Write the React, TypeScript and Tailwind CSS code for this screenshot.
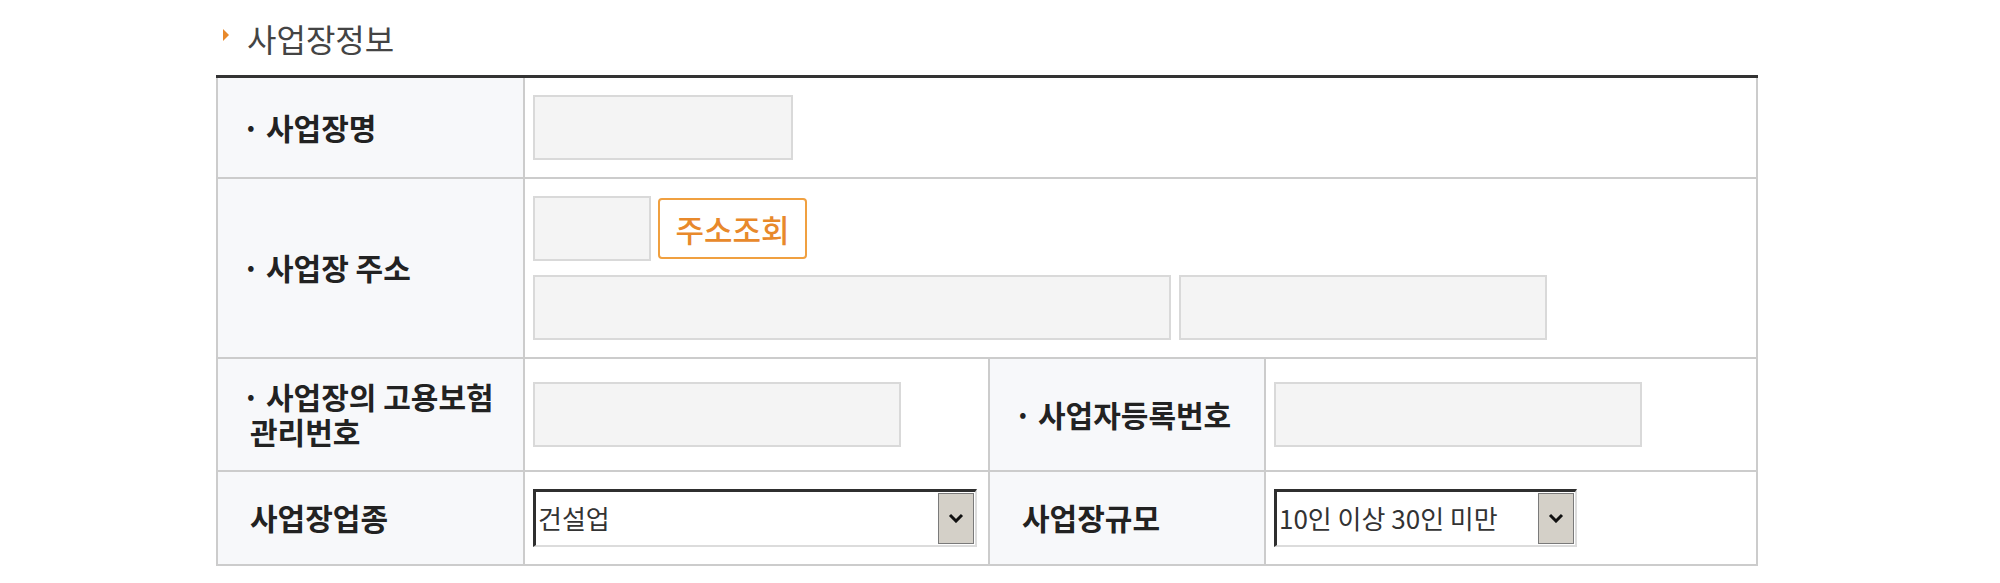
import React from "react";

const labelCell =
  "bg-[#f7f8fa] border-2 border-[#cccccc] pl-[32px] align-middle text-left font-bold text-[30px] leading-[35px] text-[#222]";
const valueCell = "border-2 border-[#cccccc] pl-[8px] align-middle bg-white";
const inputBox = "block h-[65px] bg-[#f4f4f4] border-2 border-[#d9d9d9] outline-none";

const Dot = () => <span className="-ml-[8px] inline-block w-[24px]">·</span>;

const Chevron = () => (
  <svg width="16" height="10" viewBox="0 0 16 10">
    <path d="M2 2 L8 8 L14 2" fill="none" stroke="#111" strokeWidth="3" />
  </svg>
);

const SelectBox = ({ value, width }: { value: string; width: string }) => (
  <div
    className={`${width} h-[58px] flex items-stretch bg-white border-t-[3px] border-l-[3px] border-t-[#2f2f2f] border-l-[#2f2f2f] border-b-2 border-r-2 border-b-[#dcdcdc] border-r-[#dcdcdc]`}
  >
    <div className="flex-1 flex items-center pl-[2px] text-[26px] font-normal text-[#333] leading-none whitespace-nowrap">
      {value}
    </div>
    <div className="w-[36px] my-[1px] mr-[1px] flex items-center justify-center bg-[#d4d0c8] border border-[#7a7a7a]">
      <Chevron />
    </div>
  </div>
);

const App = () => {
  return (
    <div className="w-[2000px] h-[583px] bg-white font-['Noto_Sans_CJK_KR','Malgun_Gothic',sans-serif]">
      <div className="ml-[216px] w-[1540px]">
        <div className="h-[75px] flex items-start pt-[19px]">
          <span className="mt-[10px] ml-[7px] w-0 h-0 border-y-[6px] border-y-transparent border-l-[6px] border-l-[#e8892b]" />
          <h2 className="ml-[18px] text-[32px] leading-[38px] font-normal text-[#444]">사업장정보</h2>
        </div>
        <table className="w-[1540px] table-fixed border-collapse border-t-[3px] border-t-[#333]">
          <colgroup>
            <col className="w-[307px]" />
            <col className="w-[465px]" />
            <col className="w-[276px]" />
            <col className="w-[492px]" />
          </colgroup>
          <tbody>
            <tr className="h-[101px]">
              <td className={labelCell}>
                <Dot />
                사업장명
              </td>
              <td className={valueCell} colSpan={3}>
                <input readOnly className={`${inputBox} w-[260px]`} />
              </td>
            </tr>
            <tr className="h-[180px]">
              <td className={labelCell}>
                <Dot />
                사업장 주소
              </td>
              <td className={valueCell} colSpan={3}>
                <div className="flex flex-col gap-[14px]">
                  <div className="flex items-center gap-[7px]">
                    <input readOnly className={`${inputBox} w-[118px]`} />
                    <button className="h-[61px] w-[149px] rounded-[4px] border-2 border-[#f0a040] bg-white text-[31px] leading-none font-medium text-[#e8892b]">
                      주소조회
                    </button>
                  </div>
                  <div className="flex gap-[8px]">
                    <input readOnly className={`${inputBox} w-[638px]`} />
                    <input readOnly className={`${inputBox} w-[368px]`} />
                  </div>
                </div>
              </td>
            </tr>
            <tr className="h-[113px]">
              <td className={labelCell}>
                <Dot />
                사업장의 고용보험
                <br />
                관리번호
              </td>
              <td className={valueCell}>
                <input readOnly className={`${inputBox} w-[368px]`} />
              </td>
              <td className={labelCell}>
                <Dot />
                사업자등록번호
              </td>
              <td className={valueCell}>
                <input readOnly className={`${inputBox} w-[368px]`} />
              </td>
            </tr>
            <tr className="h-[94px]">
              <td className={labelCell}>사업장업종</td>
              <td className={valueCell}>
                <SelectBox value="건설업" width="w-[444px]" />
              </td>
              <td className={labelCell}>사업장규모</td>
              <td className={valueCell}>
                <SelectBox value="10인 이상 30인 미만" width="w-[303px]" />
              </td>
            </tr>
          </tbody>
        </table>
      </div>
    </div>
  );
};

export default App;
